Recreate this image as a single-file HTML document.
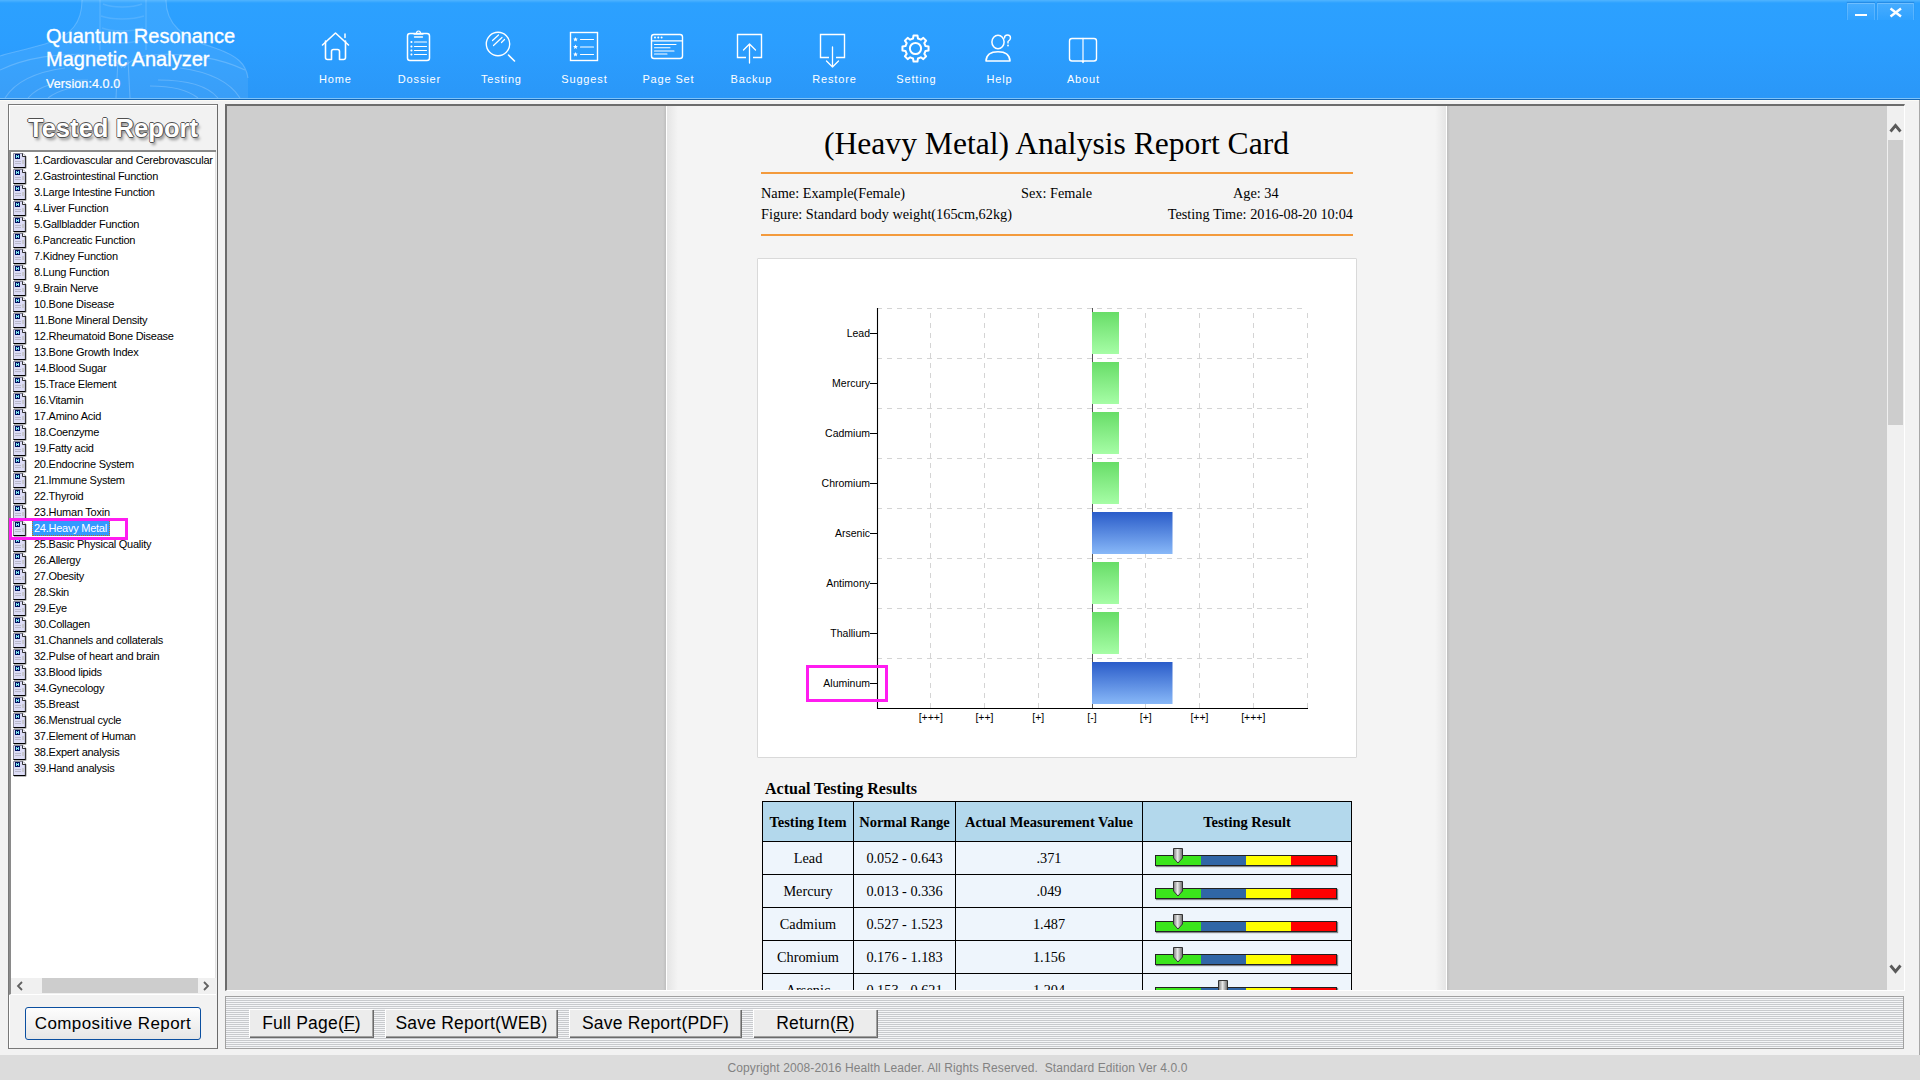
<!DOCTYPE html>
<html><head><meta charset="utf-8">
<style>
*{margin:0;padding:0;box-sizing:border-box}
html,body{width:1920px;height:1080px;overflow:hidden;background:#f2f2f2;font-family:"Liberation Sans",sans-serif;position:relative}
.a{position:absolute}
.ttl{color:#fff;font-size:20px;line-height:23px;white-space:nowrap;-webkit-text-stroke:0.35px #fff}
.nav{color:#fff;font-size:11px;line-height:14px;letter-spacing:0.85px;padding-left:0.85px;white-space:nowrap;text-align:center;width:100px}
.li{position:absolute;left:34px;font-size:11px;line-height:16px;letter-spacing:-0.25px;white-space:nowrap;color:#000}
.ico{position:absolute;left:13px;width:14px;height:16px}
.btn{position:absolute;background:#ececec;border-top:1px solid #fff;border-left:1px solid #fff;box-shadow:1px 1px 0 #6a6a6a, inset -1px -1px 0 #a0a0a0;font-size:17.5px;line-height:26px;letter-spacing:0.2px;text-align:center;color:#000;white-space:nowrap}
.serif{font-family:"Liberation Serif",serif}
.cl{position:absolute;font-size:10.5px;line-height:12px;color:#000;white-space:nowrap}
td,th{border:1px solid #000}
</style></head><body>

<div class="a" style="left:0;top:0;width:1920px;height:98px;background:linear-gradient(#2ca1ff,#2b9eff 45%,#2a97f8)"></div>
<div class="a" style="left:0;top:0;width:1920px;height:3px;background:linear-gradient(#50b4ff,#2ca1ff)"></div>
<div class="a" style="left:0;top:98px;width:1920px;height:1px;background:#80c4fa"></div>
<div class="a" style="left:0;top:99px;width:1920px;height:1px;background:#1567b5"></div>
<div class="a" style="left:0;top:100px;width:1920px;height:1px;background:#fbfaf6"></div>
<svg class="a" style="left:0;top:0" width="300" height="98" viewBox="0 0 300 98">
<path d="M82 0 C82 22 72 36 45 44 C25 50 8 53 0 56 L0 98 L248 98 L248 78 C246 64 238 56 215 48 C182 38 166 24 166 0 Z" fill="#ffffff" fill-opacity="0.07"/>
<g fill="none" stroke="#ffffff" stroke-opacity="0.2" stroke-width="1.1">
<path d="M82 0 C82 22 72 36 45 44 C25 50 8 53 0 56"/>
<path d="M166 0 C166 24 182 38 215 48 C238 56 246 64 248 78"/>
<path d="M0 70 C25 58 60 52 95 55 C110 57 118 62 122 68"/>
<path d="M245 70 C220 58 185 52 150 55 C136 57 128 62 124 68"/>
<path d="M5 98 C15 82 35 72 65 68"/><path d="M240 98 C230 82 210 72 180 68"/>
<path d="M28 98 C38 86 58 80 88 80"/><path d="M218 98 C208 86 188 80 158 80"/>
<path d="M48 98 C58 90 75 86 95 86"/><path d="M198 98 C188 90 170 86 150 86"/>
<path d="M118 60 L116 98 M128 60 L130 98"/>
</g>
<g fill="none" stroke="#ffffff" stroke-opacity="0.12" stroke-width="1.5">
<path d="M103 4 C112 8 132 8 142 4 M101 16 C112 20 132 20 144 16 M102 28 C112 32 132 32 143 28 M104 40 C114 44 130 44 140 40"/>
<path d="M100 0 V50 M146 0 V50"/>
</g>
</svg>
<div class="a ttl" style="left:46px;top:25px">Quantum Resonance</div>
<div class="a ttl" style="left:46px;top:48px">Magnetic Analyzer</div>
<div class="a ttl" style="left:46px;top:77px;font-size:12.5px;line-height:15px;letter-spacing:0.1px;-webkit-text-stroke:0.2px #fff">Version:4.0.0</div>
<div class="a nav" style="left:285px;top:72.4px">Home</div>
<div class="a nav" style="left:369px;top:72.4px">Dossier</div>
<div class="a nav" style="left:451px;top:72.4px">Testing</div>
<div class="a nav" style="left:534px;top:72.4px">Suggest</div>
<div class="a nav" style="left:618px;top:72.4px">Page Set</div>
<div class="a nav" style="left:701px;top:72.4px">Backup</div>
<div class="a nav" style="left:784px;top:72.4px">Restore</div>
<div class="a nav" style="left:866px;top:72.4px">Setting</div>
<div class="a nav" style="left:949px;top:72.4px">Help</div>
<div class="a nav" style="left:1033px;top:72.4px">About</div>
<svg class="a" style="left:0;top:0" width="1200" height="98" viewBox="0 0 1200 98">
<g stroke="#fff" fill="none" stroke-width="2" stroke-linejoin="round" stroke-linecap="round">
<!-- home -->
<path d="M322.5 45 L335.5 33 L348.5 45" stroke-width="1.6"/>
<path d="M325.5 41 V57.5 Q325.5 59.5 327.5 59.5 H331.5 V51.5 Q331.5 49.5 333.5 49.5 H337.5 Q339.5 49.5 339.5 51.5 V59.5 H343.5 Q345.5 59.5 345.5 57.5 V41" stroke-width="1.6"/>
<path d="M345 34 V37.5" stroke-width="1.5"/>
<!-- dossier -->
<rect x="407.5" y="33.5" width="22" height="27" rx="2.5" stroke-width="1.5"/>
<path d="M414 34 H423 M414.5 37 H422.5" stroke-width="1.3"/>
<path d="M416.5 33.5 Q416.5 31 418.5 31 Q420.5 31 420.5 33.5" stroke-width="1.2"/>
<path d="M414.5 42 H426.5 M414.5 46.5 H426.5 M414.5 50.5 H426.5 M414.5 54.5 H426.5" stroke-width="1.2"/>
<path d="M411.3 42 h0.3 M411.3 46.5 h0.3 M411.3 50.5 h0.3 M411.3 54.5 h0.3" stroke-width="1.8"/>
<!-- testing -->
<circle cx="498" cy="44" r="11.7" stroke-width="1.4"/>
<path d="M508.5 55 L514.5 61" stroke-width="1.6"/>
<path d="M492.5 40.5 L498.5 35 M493.5 45.5 L502 37.5 M501.5 42.5 L504.5 39.5" stroke-width="1.2"/>
<!-- suggest -->
<rect x="570.5" y="32.5" width="27" height="28" stroke-width="1.4" stroke-linejoin="miter"/>
<path d="M580.5 39.5 H593.5 M580.5 47 H593.5 M580.5 54.5 H593.5" stroke-width="1.2"/>
<!-- page set -->
<rect x="651.5" y="34.5" width="31" height="24" rx="2.5" stroke-width="1.4"/>
<path d="M652 40.8 H682" stroke-width="1.3"/>
<path d="M654.5 44.5 H676 M654.5 47.8 H670 M654.5 51 H674 M654.5 54 H667" stroke-width="1.1"/>
<!-- backup -->
<path d="M746 57.5 H737.5 V34.5 H761.5 V57.5 H753" stroke-width="1.4" stroke-linejoin="miter" stroke-linecap="butt"/>
<path d="M749.5 44 V63 M743.5 50 L749.5 44 L755.5 50" stroke-width="1.3"/>
<!-- restore -->
<path d="M829 57.5 H820.5 V34.5 H844.5 V57.5 H836" stroke-width="1.4" stroke-linejoin="miter" stroke-linecap="butt"/>
<path d="M832.5 47 V67 M826.5 61 L832.5 67 L838.5 61" stroke-width="1.3"/>
<!-- about -->
<rect x="1069.5" y="38.5" width="27" height="22.5" rx="2.5" stroke-width="1.4"/>
<path d="M1083 38.5 V62" stroke-width="1.6" stroke-opacity="0.75"/>
<!-- help -->
<ellipse cx="998" cy="42" rx="6.1" ry="6.8" stroke-width="1.5"/>
<path d="M986 61 Q986.5 51.8 998 51.8 Q1009.5 51.8 1010 61 Z" stroke-width="1.6"/>
<path d="M1004.5 38 Q1004.5 35 1007.5 35 Q1010.5 35 1010.5 38 Q1010.5 40 1008 41.5 V43" stroke-width="1.4"/>
</g>
<circle cx="1008" cy="45.5" r="0.9" fill="#fff"/>
<g fill="#fff">
<path d="M575.5 37 l0.7 1.6 1.7 0.1 -1.3 1.1 0.4 1.7 -1.5 -0.9 -1.5 0.9 0.4 -1.7 -1.3 -1.1 1.7 -0.1z"/>
<path d="M575.5 44.5 l0.7 1.6 1.7 0.1 -1.3 1.1 0.4 1.7 -1.5 -0.9 -1.5 0.9 0.4 -1.7 -1.3 -1.1 1.7 -0.1z"/>
<path d="M575.5 52 l0.7 1.6 1.7 0.1 -1.3 1.1 0.4 1.7 -1.5 -0.9 -1.5 0.9 0.4 -1.7 -1.3 -1.1 1.7 -0.1z"/>
<circle cx="655" cy="37.6" r="1"/><circle cx="658.3" cy="37.6" r="1"/><circle cx="661.6" cy="37.6" r="1"/>
<path d="M1081.5 61 L1083 63.5 L1084.5 61z"/>
</g>

<path d="M925.50 46.05 L928.55 46.53 L928.55 50.47 L925.50 50.95 L924.31 53.84 L926.12 56.33 L923.33 59.12 L920.84 57.31 L917.95 58.50 L917.47 61.55 L913.53 61.55 L913.05 58.50 L910.16 57.31 L907.67 59.12 L904.88 56.33 L906.69 53.84 L905.50 50.95 L902.45 50.47 L902.45 46.53 L905.50 46.05 L906.69 43.16 L904.88 40.67 L907.67 37.88 L910.16 39.69 L913.05 38.50 L913.53 35.45 L917.47 35.45 L917.95 38.50 L920.84 39.69 L923.33 37.88 L926.12 40.67 L924.31 43.16Z" stroke="#fff" fill="none" stroke-width="2" stroke-width="1.3" stroke-linejoin="round"/><circle cx="915.5" cy="48.5" r="5.6" stroke="#fff" fill="none" stroke-width="2" stroke-width="1.3"/>
</svg>
<div class="a" style="left:1847px;top:3px;width:28px;height:17px;border:1px solid rgba(255,255,255,0.16);border-top-color:rgba(255,255,255,0.3);border-bottom:none;background:linear-gradient(rgba(255,255,255,0.12),rgba(255,255,255,0.02));box-shadow:0 -1px 1px rgba(0,70,160,0.25)"></div>
<div class="a" style="left:1877px;top:3px;width:37px;height:17px;border:1px solid rgba(255,255,255,0.16);border-top-color:rgba(255,255,255,0.3);border-bottom:none;background:linear-gradient(rgba(255,255,255,0.12),rgba(255,255,255,0.02));box-shadow:0 -1px 1px rgba(0,70,160,0.25)"></div>
<div class="a" style="left:1855px;top:13.5px;width:11.5px;height:2.5px;background:#fff"></div>
<svg class="a" style="left:1880px;top:0" width="30" height="24"><path d="M10.5 8.5 L21 16.5 M21 8.5 L10.5 16.5" stroke="#fff" stroke-width="2.4"/></svg>
<div class="a" style="left:1919px;top:100px;width:1px;height:980px;background:#a8a8a8"></div>
<div class="a" style="left:8px;top:104px;width:210px;height:945px;border:1px solid #787878;border-right-color:#6a6a6a;box-shadow:inset 1px 1px 0 #fff"></div>
<div class="a" style="left:8px;top:111px;width:210px;text-align:center;font-weight:bold;font-size:25.6px;line-height:34px;color:#fff;letter-spacing:0px;text-shadow:-0.9px 0 0 #505050,0.9px 0 0 #505050,0 -0.9px 0 #505050,0 0.9px 0 #505050,2px 3px 3px rgba(0,0,0,0.4)">Tested Report</div>
<div class="a" style="left:9px;top:150px;width:207px;height:845px;border-top:2px solid #8a8a8a;border-left:2px solid #8a8a8a;border-bottom:1px solid #fff;background:#fff"></div>
<div class="a" style="left:215px;top:152px;width:1px;height:842px;background:#e3e3e3"></div>
<div class="li" style="top:152px">1.Cardiovascular and Cerebrovascular</div>
<div class="li" style="top:168px">2.Gastrointestinal Function</div>
<div class="li" style="top:184px">3.Large Intestine Function</div>
<div class="li" style="top:200px">4.Liver Function</div>
<div class="li" style="top:216px">5.Gallbladder Function</div>
<div class="li" style="top:232px">6.Pancreatic Function</div>
<div class="li" style="top:248px">7.Kidney Function</div>
<div class="li" style="top:264px">8.Lung Function</div>
<div class="li" style="top:280px">9.Brain Nerve</div>
<div class="li" style="top:296px">10.Bone Disease</div>
<div class="li" style="top:312px">11.Bone Mineral Density</div>
<div class="li" style="top:328px">12.Rheumatoid Bone Disease</div>
<div class="li" style="top:344px">13.Bone Growth Index</div>
<div class="li" style="top:360px">14.Blood Sugar</div>
<div class="li" style="top:376px">15.Trace Element</div>
<div class="li" style="top:392px">16.Vitamin</div>
<div class="li" style="top:408px">17.Amino Acid</div>
<div class="li" style="top:424px">18.Coenzyme</div>
<div class="li" style="top:440px">19.Fatty acid</div>
<div class="li" style="top:456px">20.Endocrine System</div>
<div class="li" style="top:472px">21.Immune System</div>
<div class="li" style="top:488px">22.Thyroid</div>
<div class="li" style="top:504px">23.Human Toxin</div>
<div class="li" style="top:520px">24.Heavy Metal</div>
<div class="li" style="top:536px">25.Basic Physical Quality</div>
<div class="li" style="top:552px">26.Allergy</div>
<div class="li" style="top:568px">27.Obesity</div>
<div class="li" style="top:584px">28.Skin</div>
<div class="li" style="top:600px">29.Eye</div>
<div class="li" style="top:616px">30.Collagen</div>
<div class="li" style="top:632px">31.Channels and collaterals</div>
<div class="li" style="top:648px">32.Pulse of heart and brain</div>
<div class="li" style="top:664px">33.Blood lipids</div>
<div class="li" style="top:680px">34.Gynecology</div>
<div class="li" style="top:696px">35.Breast</div>
<div class="li" style="top:712px">36.Menstrual cycle</div>
<div class="li" style="top:728px">37.Element of Human</div>
<div class="li" style="top:744px">38.Expert analysis</div>
<div class="li" style="top:760px">39.Hand analysis</div>
<svg class="ico" style="top:153px" width="14" height="16" viewBox="0 0 14 16"><path d="M0.5 0.5 H10 L12.5 3 V14.5 H0.5 Z" fill="#dcdcf6" stroke="#8a8a9a"/><path d="M12.5 3 V14.5 H0.5" fill="none" stroke="#000" stroke-width="1.2"/><path d="M9.5 0.5 V3.5 H12.5" fill="#fff" stroke="#000" stroke-width="0.8"/><rect x="2" y="1" width="5" height="5" fill="#001060"/><rect x="3" y="2" width="1" height="3" fill="#7ee8f0"/><rect x="5" y="2" width="1" height="3" fill="#7ee8f0"/><rect x="3" y="3" width="3" height="1" fill="#7ee8f0"/><path d="M2 8.5 H8 M2 10.5 H8" stroke="#b0b0c0" stroke-width="0.8"/><rect x="9" y="7" width="2" height="4" fill="#c8c8d0"/><path d="M13 3.5 V15.5 H1" fill="none" stroke="#999" stroke-width="0.7"/></svg>
<svg class="ico" style="top:169px" width="14" height="16" viewBox="0 0 14 16"><path d="M0.5 0.5 H10 L12.5 3 V14.5 H0.5 Z" fill="#dcdcf6" stroke="#8a8a9a"/><path d="M12.5 3 V14.5 H0.5" fill="none" stroke="#000" stroke-width="1.2"/><path d="M9.5 0.5 V3.5 H12.5" fill="#fff" stroke="#000" stroke-width="0.8"/><rect x="2" y="1" width="5" height="5" fill="#001060"/><rect x="3" y="2" width="1" height="3" fill="#7ee8f0"/><rect x="5" y="2" width="1" height="3" fill="#7ee8f0"/><rect x="3" y="3" width="3" height="1" fill="#7ee8f0"/><path d="M2 8.5 H8 M2 10.5 H8" stroke="#b0b0c0" stroke-width="0.8"/><rect x="9" y="7" width="2" height="4" fill="#c8c8d0"/><path d="M13 3.5 V15.5 H1" fill="none" stroke="#999" stroke-width="0.7"/></svg>
<svg class="ico" style="top:185px" width="14" height="16" viewBox="0 0 14 16"><path d="M0.5 0.5 H10 L12.5 3 V14.5 H0.5 Z" fill="#dcdcf6" stroke="#8a8a9a"/><path d="M12.5 3 V14.5 H0.5" fill="none" stroke="#000" stroke-width="1.2"/><path d="M9.5 0.5 V3.5 H12.5" fill="#fff" stroke="#000" stroke-width="0.8"/><rect x="2" y="1" width="5" height="5" fill="#001060"/><rect x="3" y="2" width="1" height="3" fill="#7ee8f0"/><rect x="5" y="2" width="1" height="3" fill="#7ee8f0"/><rect x="3" y="3" width="3" height="1" fill="#7ee8f0"/><path d="M2 8.5 H8 M2 10.5 H8" stroke="#b0b0c0" stroke-width="0.8"/><rect x="9" y="7" width="2" height="4" fill="#c8c8d0"/><path d="M13 3.5 V15.5 H1" fill="none" stroke="#999" stroke-width="0.7"/></svg>
<svg class="ico" style="top:201px" width="14" height="16" viewBox="0 0 14 16"><path d="M0.5 0.5 H10 L12.5 3 V14.5 H0.5 Z" fill="#dcdcf6" stroke="#8a8a9a"/><path d="M12.5 3 V14.5 H0.5" fill="none" stroke="#000" stroke-width="1.2"/><path d="M9.5 0.5 V3.5 H12.5" fill="#fff" stroke="#000" stroke-width="0.8"/><rect x="2" y="1" width="5" height="5" fill="#001060"/><rect x="3" y="2" width="1" height="3" fill="#7ee8f0"/><rect x="5" y="2" width="1" height="3" fill="#7ee8f0"/><rect x="3" y="3" width="3" height="1" fill="#7ee8f0"/><path d="M2 8.5 H8 M2 10.5 H8" stroke="#b0b0c0" stroke-width="0.8"/><rect x="9" y="7" width="2" height="4" fill="#c8c8d0"/><path d="M13 3.5 V15.5 H1" fill="none" stroke="#999" stroke-width="0.7"/></svg>
<svg class="ico" style="top:217px" width="14" height="16" viewBox="0 0 14 16"><path d="M0.5 0.5 H10 L12.5 3 V14.5 H0.5 Z" fill="#dcdcf6" stroke="#8a8a9a"/><path d="M12.5 3 V14.5 H0.5" fill="none" stroke="#000" stroke-width="1.2"/><path d="M9.5 0.5 V3.5 H12.5" fill="#fff" stroke="#000" stroke-width="0.8"/><rect x="2" y="1" width="5" height="5" fill="#001060"/><rect x="3" y="2" width="1" height="3" fill="#7ee8f0"/><rect x="5" y="2" width="1" height="3" fill="#7ee8f0"/><rect x="3" y="3" width="3" height="1" fill="#7ee8f0"/><path d="M2 8.5 H8 M2 10.5 H8" stroke="#b0b0c0" stroke-width="0.8"/><rect x="9" y="7" width="2" height="4" fill="#c8c8d0"/><path d="M13 3.5 V15.5 H1" fill="none" stroke="#999" stroke-width="0.7"/></svg>
<svg class="ico" style="top:233px" width="14" height="16" viewBox="0 0 14 16"><path d="M0.5 0.5 H10 L12.5 3 V14.5 H0.5 Z" fill="#dcdcf6" stroke="#8a8a9a"/><path d="M12.5 3 V14.5 H0.5" fill="none" stroke="#000" stroke-width="1.2"/><path d="M9.5 0.5 V3.5 H12.5" fill="#fff" stroke="#000" stroke-width="0.8"/><rect x="2" y="1" width="5" height="5" fill="#001060"/><rect x="3" y="2" width="1" height="3" fill="#7ee8f0"/><rect x="5" y="2" width="1" height="3" fill="#7ee8f0"/><rect x="3" y="3" width="3" height="1" fill="#7ee8f0"/><path d="M2 8.5 H8 M2 10.5 H8" stroke="#b0b0c0" stroke-width="0.8"/><rect x="9" y="7" width="2" height="4" fill="#c8c8d0"/><path d="M13 3.5 V15.5 H1" fill="none" stroke="#999" stroke-width="0.7"/></svg>
<svg class="ico" style="top:249px" width="14" height="16" viewBox="0 0 14 16"><path d="M0.5 0.5 H10 L12.5 3 V14.5 H0.5 Z" fill="#dcdcf6" stroke="#8a8a9a"/><path d="M12.5 3 V14.5 H0.5" fill="none" stroke="#000" stroke-width="1.2"/><path d="M9.5 0.5 V3.5 H12.5" fill="#fff" stroke="#000" stroke-width="0.8"/><rect x="2" y="1" width="5" height="5" fill="#001060"/><rect x="3" y="2" width="1" height="3" fill="#7ee8f0"/><rect x="5" y="2" width="1" height="3" fill="#7ee8f0"/><rect x="3" y="3" width="3" height="1" fill="#7ee8f0"/><path d="M2 8.5 H8 M2 10.5 H8" stroke="#b0b0c0" stroke-width="0.8"/><rect x="9" y="7" width="2" height="4" fill="#c8c8d0"/><path d="M13 3.5 V15.5 H1" fill="none" stroke="#999" stroke-width="0.7"/></svg>
<svg class="ico" style="top:265px" width="14" height="16" viewBox="0 0 14 16"><path d="M0.5 0.5 H10 L12.5 3 V14.5 H0.5 Z" fill="#dcdcf6" stroke="#8a8a9a"/><path d="M12.5 3 V14.5 H0.5" fill="none" stroke="#000" stroke-width="1.2"/><path d="M9.5 0.5 V3.5 H12.5" fill="#fff" stroke="#000" stroke-width="0.8"/><rect x="2" y="1" width="5" height="5" fill="#001060"/><rect x="3" y="2" width="1" height="3" fill="#7ee8f0"/><rect x="5" y="2" width="1" height="3" fill="#7ee8f0"/><rect x="3" y="3" width="3" height="1" fill="#7ee8f0"/><path d="M2 8.5 H8 M2 10.5 H8" stroke="#b0b0c0" stroke-width="0.8"/><rect x="9" y="7" width="2" height="4" fill="#c8c8d0"/><path d="M13 3.5 V15.5 H1" fill="none" stroke="#999" stroke-width="0.7"/></svg>
<svg class="ico" style="top:281px" width="14" height="16" viewBox="0 0 14 16"><path d="M0.5 0.5 H10 L12.5 3 V14.5 H0.5 Z" fill="#dcdcf6" stroke="#8a8a9a"/><path d="M12.5 3 V14.5 H0.5" fill="none" stroke="#000" stroke-width="1.2"/><path d="M9.5 0.5 V3.5 H12.5" fill="#fff" stroke="#000" stroke-width="0.8"/><rect x="2" y="1" width="5" height="5" fill="#001060"/><rect x="3" y="2" width="1" height="3" fill="#7ee8f0"/><rect x="5" y="2" width="1" height="3" fill="#7ee8f0"/><rect x="3" y="3" width="3" height="1" fill="#7ee8f0"/><path d="M2 8.5 H8 M2 10.5 H8" stroke="#b0b0c0" stroke-width="0.8"/><rect x="9" y="7" width="2" height="4" fill="#c8c8d0"/><path d="M13 3.5 V15.5 H1" fill="none" stroke="#999" stroke-width="0.7"/></svg>
<svg class="ico" style="top:297px" width="14" height="16" viewBox="0 0 14 16"><path d="M0.5 0.5 H10 L12.5 3 V14.5 H0.5 Z" fill="#dcdcf6" stroke="#8a8a9a"/><path d="M12.5 3 V14.5 H0.5" fill="none" stroke="#000" stroke-width="1.2"/><path d="M9.5 0.5 V3.5 H12.5" fill="#fff" stroke="#000" stroke-width="0.8"/><rect x="2" y="1" width="5" height="5" fill="#001060"/><rect x="3" y="2" width="1" height="3" fill="#7ee8f0"/><rect x="5" y="2" width="1" height="3" fill="#7ee8f0"/><rect x="3" y="3" width="3" height="1" fill="#7ee8f0"/><path d="M2 8.5 H8 M2 10.5 H8" stroke="#b0b0c0" stroke-width="0.8"/><rect x="9" y="7" width="2" height="4" fill="#c8c8d0"/><path d="M13 3.5 V15.5 H1" fill="none" stroke="#999" stroke-width="0.7"/></svg>
<svg class="ico" style="top:313px" width="14" height="16" viewBox="0 0 14 16"><path d="M0.5 0.5 H10 L12.5 3 V14.5 H0.5 Z" fill="#dcdcf6" stroke="#8a8a9a"/><path d="M12.5 3 V14.5 H0.5" fill="none" stroke="#000" stroke-width="1.2"/><path d="M9.5 0.5 V3.5 H12.5" fill="#fff" stroke="#000" stroke-width="0.8"/><rect x="2" y="1" width="5" height="5" fill="#001060"/><rect x="3" y="2" width="1" height="3" fill="#7ee8f0"/><rect x="5" y="2" width="1" height="3" fill="#7ee8f0"/><rect x="3" y="3" width="3" height="1" fill="#7ee8f0"/><path d="M2 8.5 H8 M2 10.5 H8" stroke="#b0b0c0" stroke-width="0.8"/><rect x="9" y="7" width="2" height="4" fill="#c8c8d0"/><path d="M13 3.5 V15.5 H1" fill="none" stroke="#999" stroke-width="0.7"/></svg>
<svg class="ico" style="top:329px" width="14" height="16" viewBox="0 0 14 16"><path d="M0.5 0.5 H10 L12.5 3 V14.5 H0.5 Z" fill="#dcdcf6" stroke="#8a8a9a"/><path d="M12.5 3 V14.5 H0.5" fill="none" stroke="#000" stroke-width="1.2"/><path d="M9.5 0.5 V3.5 H12.5" fill="#fff" stroke="#000" stroke-width="0.8"/><rect x="2" y="1" width="5" height="5" fill="#001060"/><rect x="3" y="2" width="1" height="3" fill="#7ee8f0"/><rect x="5" y="2" width="1" height="3" fill="#7ee8f0"/><rect x="3" y="3" width="3" height="1" fill="#7ee8f0"/><path d="M2 8.5 H8 M2 10.5 H8" stroke="#b0b0c0" stroke-width="0.8"/><rect x="9" y="7" width="2" height="4" fill="#c8c8d0"/><path d="M13 3.5 V15.5 H1" fill="none" stroke="#999" stroke-width="0.7"/></svg>
<svg class="ico" style="top:345px" width="14" height="16" viewBox="0 0 14 16"><path d="M0.5 0.5 H10 L12.5 3 V14.5 H0.5 Z" fill="#dcdcf6" stroke="#8a8a9a"/><path d="M12.5 3 V14.5 H0.5" fill="none" stroke="#000" stroke-width="1.2"/><path d="M9.5 0.5 V3.5 H12.5" fill="#fff" stroke="#000" stroke-width="0.8"/><rect x="2" y="1" width="5" height="5" fill="#001060"/><rect x="3" y="2" width="1" height="3" fill="#7ee8f0"/><rect x="5" y="2" width="1" height="3" fill="#7ee8f0"/><rect x="3" y="3" width="3" height="1" fill="#7ee8f0"/><path d="M2 8.5 H8 M2 10.5 H8" stroke="#b0b0c0" stroke-width="0.8"/><rect x="9" y="7" width="2" height="4" fill="#c8c8d0"/><path d="M13 3.5 V15.5 H1" fill="none" stroke="#999" stroke-width="0.7"/></svg>
<svg class="ico" style="top:361px" width="14" height="16" viewBox="0 0 14 16"><path d="M0.5 0.5 H10 L12.5 3 V14.5 H0.5 Z" fill="#dcdcf6" stroke="#8a8a9a"/><path d="M12.5 3 V14.5 H0.5" fill="none" stroke="#000" stroke-width="1.2"/><path d="M9.5 0.5 V3.5 H12.5" fill="#fff" stroke="#000" stroke-width="0.8"/><rect x="2" y="1" width="5" height="5" fill="#001060"/><rect x="3" y="2" width="1" height="3" fill="#7ee8f0"/><rect x="5" y="2" width="1" height="3" fill="#7ee8f0"/><rect x="3" y="3" width="3" height="1" fill="#7ee8f0"/><path d="M2 8.5 H8 M2 10.5 H8" stroke="#b0b0c0" stroke-width="0.8"/><rect x="9" y="7" width="2" height="4" fill="#c8c8d0"/><path d="M13 3.5 V15.5 H1" fill="none" stroke="#999" stroke-width="0.7"/></svg>
<svg class="ico" style="top:377px" width="14" height="16" viewBox="0 0 14 16"><path d="M0.5 0.5 H10 L12.5 3 V14.5 H0.5 Z" fill="#dcdcf6" stroke="#8a8a9a"/><path d="M12.5 3 V14.5 H0.5" fill="none" stroke="#000" stroke-width="1.2"/><path d="M9.5 0.5 V3.5 H12.5" fill="#fff" stroke="#000" stroke-width="0.8"/><rect x="2" y="1" width="5" height="5" fill="#001060"/><rect x="3" y="2" width="1" height="3" fill="#7ee8f0"/><rect x="5" y="2" width="1" height="3" fill="#7ee8f0"/><rect x="3" y="3" width="3" height="1" fill="#7ee8f0"/><path d="M2 8.5 H8 M2 10.5 H8" stroke="#b0b0c0" stroke-width="0.8"/><rect x="9" y="7" width="2" height="4" fill="#c8c8d0"/><path d="M13 3.5 V15.5 H1" fill="none" stroke="#999" stroke-width="0.7"/></svg>
<svg class="ico" style="top:393px" width="14" height="16" viewBox="0 0 14 16"><path d="M0.5 0.5 H10 L12.5 3 V14.5 H0.5 Z" fill="#dcdcf6" stroke="#8a8a9a"/><path d="M12.5 3 V14.5 H0.5" fill="none" stroke="#000" stroke-width="1.2"/><path d="M9.5 0.5 V3.5 H12.5" fill="#fff" stroke="#000" stroke-width="0.8"/><rect x="2" y="1" width="5" height="5" fill="#001060"/><rect x="3" y="2" width="1" height="3" fill="#7ee8f0"/><rect x="5" y="2" width="1" height="3" fill="#7ee8f0"/><rect x="3" y="3" width="3" height="1" fill="#7ee8f0"/><path d="M2 8.5 H8 M2 10.5 H8" stroke="#b0b0c0" stroke-width="0.8"/><rect x="9" y="7" width="2" height="4" fill="#c8c8d0"/><path d="M13 3.5 V15.5 H1" fill="none" stroke="#999" stroke-width="0.7"/></svg>
<svg class="ico" style="top:409px" width="14" height="16" viewBox="0 0 14 16"><path d="M0.5 0.5 H10 L12.5 3 V14.5 H0.5 Z" fill="#dcdcf6" stroke="#8a8a9a"/><path d="M12.5 3 V14.5 H0.5" fill="none" stroke="#000" stroke-width="1.2"/><path d="M9.5 0.5 V3.5 H12.5" fill="#fff" stroke="#000" stroke-width="0.8"/><rect x="2" y="1" width="5" height="5" fill="#001060"/><rect x="3" y="2" width="1" height="3" fill="#7ee8f0"/><rect x="5" y="2" width="1" height="3" fill="#7ee8f0"/><rect x="3" y="3" width="3" height="1" fill="#7ee8f0"/><path d="M2 8.5 H8 M2 10.5 H8" stroke="#b0b0c0" stroke-width="0.8"/><rect x="9" y="7" width="2" height="4" fill="#c8c8d0"/><path d="M13 3.5 V15.5 H1" fill="none" stroke="#999" stroke-width="0.7"/></svg>
<svg class="ico" style="top:425px" width="14" height="16" viewBox="0 0 14 16"><path d="M0.5 0.5 H10 L12.5 3 V14.5 H0.5 Z" fill="#dcdcf6" stroke="#8a8a9a"/><path d="M12.5 3 V14.5 H0.5" fill="none" stroke="#000" stroke-width="1.2"/><path d="M9.5 0.5 V3.5 H12.5" fill="#fff" stroke="#000" stroke-width="0.8"/><rect x="2" y="1" width="5" height="5" fill="#001060"/><rect x="3" y="2" width="1" height="3" fill="#7ee8f0"/><rect x="5" y="2" width="1" height="3" fill="#7ee8f0"/><rect x="3" y="3" width="3" height="1" fill="#7ee8f0"/><path d="M2 8.5 H8 M2 10.5 H8" stroke="#b0b0c0" stroke-width="0.8"/><rect x="9" y="7" width="2" height="4" fill="#c8c8d0"/><path d="M13 3.5 V15.5 H1" fill="none" stroke="#999" stroke-width="0.7"/></svg>
<svg class="ico" style="top:441px" width="14" height="16" viewBox="0 0 14 16"><path d="M0.5 0.5 H10 L12.5 3 V14.5 H0.5 Z" fill="#dcdcf6" stroke="#8a8a9a"/><path d="M12.5 3 V14.5 H0.5" fill="none" stroke="#000" stroke-width="1.2"/><path d="M9.5 0.5 V3.5 H12.5" fill="#fff" stroke="#000" stroke-width="0.8"/><rect x="2" y="1" width="5" height="5" fill="#001060"/><rect x="3" y="2" width="1" height="3" fill="#7ee8f0"/><rect x="5" y="2" width="1" height="3" fill="#7ee8f0"/><rect x="3" y="3" width="3" height="1" fill="#7ee8f0"/><path d="M2 8.5 H8 M2 10.5 H8" stroke="#b0b0c0" stroke-width="0.8"/><rect x="9" y="7" width="2" height="4" fill="#c8c8d0"/><path d="M13 3.5 V15.5 H1" fill="none" stroke="#999" stroke-width="0.7"/></svg>
<svg class="ico" style="top:457px" width="14" height="16" viewBox="0 0 14 16"><path d="M0.5 0.5 H10 L12.5 3 V14.5 H0.5 Z" fill="#dcdcf6" stroke="#8a8a9a"/><path d="M12.5 3 V14.5 H0.5" fill="none" stroke="#000" stroke-width="1.2"/><path d="M9.5 0.5 V3.5 H12.5" fill="#fff" stroke="#000" stroke-width="0.8"/><rect x="2" y="1" width="5" height="5" fill="#001060"/><rect x="3" y="2" width="1" height="3" fill="#7ee8f0"/><rect x="5" y="2" width="1" height="3" fill="#7ee8f0"/><rect x="3" y="3" width="3" height="1" fill="#7ee8f0"/><path d="M2 8.5 H8 M2 10.5 H8" stroke="#b0b0c0" stroke-width="0.8"/><rect x="9" y="7" width="2" height="4" fill="#c8c8d0"/><path d="M13 3.5 V15.5 H1" fill="none" stroke="#999" stroke-width="0.7"/></svg>
<svg class="ico" style="top:473px" width="14" height="16" viewBox="0 0 14 16"><path d="M0.5 0.5 H10 L12.5 3 V14.5 H0.5 Z" fill="#dcdcf6" stroke="#8a8a9a"/><path d="M12.5 3 V14.5 H0.5" fill="none" stroke="#000" stroke-width="1.2"/><path d="M9.5 0.5 V3.5 H12.5" fill="#fff" stroke="#000" stroke-width="0.8"/><rect x="2" y="1" width="5" height="5" fill="#001060"/><rect x="3" y="2" width="1" height="3" fill="#7ee8f0"/><rect x="5" y="2" width="1" height="3" fill="#7ee8f0"/><rect x="3" y="3" width="3" height="1" fill="#7ee8f0"/><path d="M2 8.5 H8 M2 10.5 H8" stroke="#b0b0c0" stroke-width="0.8"/><rect x="9" y="7" width="2" height="4" fill="#c8c8d0"/><path d="M13 3.5 V15.5 H1" fill="none" stroke="#999" stroke-width="0.7"/></svg>
<svg class="ico" style="top:489px" width="14" height="16" viewBox="0 0 14 16"><path d="M0.5 0.5 H10 L12.5 3 V14.5 H0.5 Z" fill="#dcdcf6" stroke="#8a8a9a"/><path d="M12.5 3 V14.5 H0.5" fill="none" stroke="#000" stroke-width="1.2"/><path d="M9.5 0.5 V3.5 H12.5" fill="#fff" stroke="#000" stroke-width="0.8"/><rect x="2" y="1" width="5" height="5" fill="#001060"/><rect x="3" y="2" width="1" height="3" fill="#7ee8f0"/><rect x="5" y="2" width="1" height="3" fill="#7ee8f0"/><rect x="3" y="3" width="3" height="1" fill="#7ee8f0"/><path d="M2 8.5 H8 M2 10.5 H8" stroke="#b0b0c0" stroke-width="0.8"/><rect x="9" y="7" width="2" height="4" fill="#c8c8d0"/><path d="M13 3.5 V15.5 H1" fill="none" stroke="#999" stroke-width="0.7"/></svg>
<svg class="ico" style="top:505px" width="14" height="16" viewBox="0 0 14 16"><path d="M0.5 0.5 H10 L12.5 3 V14.5 H0.5 Z" fill="#dcdcf6" stroke="#8a8a9a"/><path d="M12.5 3 V14.5 H0.5" fill="none" stroke="#000" stroke-width="1.2"/><path d="M9.5 0.5 V3.5 H12.5" fill="#fff" stroke="#000" stroke-width="0.8"/><rect x="2" y="1" width="5" height="5" fill="#001060"/><rect x="3" y="2" width="1" height="3" fill="#7ee8f0"/><rect x="5" y="2" width="1" height="3" fill="#7ee8f0"/><rect x="3" y="3" width="3" height="1" fill="#7ee8f0"/><path d="M2 8.5 H8 M2 10.5 H8" stroke="#b0b0c0" stroke-width="0.8"/><rect x="9" y="7" width="2" height="4" fill="#c8c8d0"/><path d="M13 3.5 V15.5 H1" fill="none" stroke="#999" stroke-width="0.7"/></svg>
<svg class="ico" style="top:521px" width="14" height="16" viewBox="0 0 14 16"><path d="M0.5 0.5 H10 L12.5 3 V14.5 H0.5 Z" fill="#dcdcf6" stroke="#8a8a9a"/><path d="M12.5 3 V14.5 H0.5" fill="none" stroke="#000" stroke-width="1.2"/><path d="M9.5 0.5 V3.5 H12.5" fill="#fff" stroke="#000" stroke-width="0.8"/><rect x="2" y="1" width="5" height="5" fill="#001060"/><rect x="3" y="2" width="1" height="3" fill="#7ee8f0"/><rect x="5" y="2" width="1" height="3" fill="#7ee8f0"/><rect x="3" y="3" width="3" height="1" fill="#7ee8f0"/><path d="M2 8.5 H8 M2 10.5 H8" stroke="#b0b0c0" stroke-width="0.8"/><rect x="9" y="7" width="2" height="4" fill="#c8c8d0"/><path d="M13 3.5 V15.5 H1" fill="none" stroke="#999" stroke-width="0.7"/></svg>
<svg class="ico" style="top:537px" width="14" height="16" viewBox="0 0 14 16"><path d="M0.5 0.5 H10 L12.5 3 V14.5 H0.5 Z" fill="#dcdcf6" stroke="#8a8a9a"/><path d="M12.5 3 V14.5 H0.5" fill="none" stroke="#000" stroke-width="1.2"/><path d="M9.5 0.5 V3.5 H12.5" fill="#fff" stroke="#000" stroke-width="0.8"/><rect x="2" y="1" width="5" height="5" fill="#001060"/><rect x="3" y="2" width="1" height="3" fill="#7ee8f0"/><rect x="5" y="2" width="1" height="3" fill="#7ee8f0"/><rect x="3" y="3" width="3" height="1" fill="#7ee8f0"/><path d="M2 8.5 H8 M2 10.5 H8" stroke="#b0b0c0" stroke-width="0.8"/><rect x="9" y="7" width="2" height="4" fill="#c8c8d0"/><path d="M13 3.5 V15.5 H1" fill="none" stroke="#999" stroke-width="0.7"/></svg>
<svg class="ico" style="top:553px" width="14" height="16" viewBox="0 0 14 16"><path d="M0.5 0.5 H10 L12.5 3 V14.5 H0.5 Z" fill="#dcdcf6" stroke="#8a8a9a"/><path d="M12.5 3 V14.5 H0.5" fill="none" stroke="#000" stroke-width="1.2"/><path d="M9.5 0.5 V3.5 H12.5" fill="#fff" stroke="#000" stroke-width="0.8"/><rect x="2" y="1" width="5" height="5" fill="#001060"/><rect x="3" y="2" width="1" height="3" fill="#7ee8f0"/><rect x="5" y="2" width="1" height="3" fill="#7ee8f0"/><rect x="3" y="3" width="3" height="1" fill="#7ee8f0"/><path d="M2 8.5 H8 M2 10.5 H8" stroke="#b0b0c0" stroke-width="0.8"/><rect x="9" y="7" width="2" height="4" fill="#c8c8d0"/><path d="M13 3.5 V15.5 H1" fill="none" stroke="#999" stroke-width="0.7"/></svg>
<svg class="ico" style="top:569px" width="14" height="16" viewBox="0 0 14 16"><path d="M0.5 0.5 H10 L12.5 3 V14.5 H0.5 Z" fill="#dcdcf6" stroke="#8a8a9a"/><path d="M12.5 3 V14.5 H0.5" fill="none" stroke="#000" stroke-width="1.2"/><path d="M9.5 0.5 V3.5 H12.5" fill="#fff" stroke="#000" stroke-width="0.8"/><rect x="2" y="1" width="5" height="5" fill="#001060"/><rect x="3" y="2" width="1" height="3" fill="#7ee8f0"/><rect x="5" y="2" width="1" height="3" fill="#7ee8f0"/><rect x="3" y="3" width="3" height="1" fill="#7ee8f0"/><path d="M2 8.5 H8 M2 10.5 H8" stroke="#b0b0c0" stroke-width="0.8"/><rect x="9" y="7" width="2" height="4" fill="#c8c8d0"/><path d="M13 3.5 V15.5 H1" fill="none" stroke="#999" stroke-width="0.7"/></svg>
<svg class="ico" style="top:585px" width="14" height="16" viewBox="0 0 14 16"><path d="M0.5 0.5 H10 L12.5 3 V14.5 H0.5 Z" fill="#dcdcf6" stroke="#8a8a9a"/><path d="M12.5 3 V14.5 H0.5" fill="none" stroke="#000" stroke-width="1.2"/><path d="M9.5 0.5 V3.5 H12.5" fill="#fff" stroke="#000" stroke-width="0.8"/><rect x="2" y="1" width="5" height="5" fill="#001060"/><rect x="3" y="2" width="1" height="3" fill="#7ee8f0"/><rect x="5" y="2" width="1" height="3" fill="#7ee8f0"/><rect x="3" y="3" width="3" height="1" fill="#7ee8f0"/><path d="M2 8.5 H8 M2 10.5 H8" stroke="#b0b0c0" stroke-width="0.8"/><rect x="9" y="7" width="2" height="4" fill="#c8c8d0"/><path d="M13 3.5 V15.5 H1" fill="none" stroke="#999" stroke-width="0.7"/></svg>
<svg class="ico" style="top:601px" width="14" height="16" viewBox="0 0 14 16"><path d="M0.5 0.5 H10 L12.5 3 V14.5 H0.5 Z" fill="#dcdcf6" stroke="#8a8a9a"/><path d="M12.5 3 V14.5 H0.5" fill="none" stroke="#000" stroke-width="1.2"/><path d="M9.5 0.5 V3.5 H12.5" fill="#fff" stroke="#000" stroke-width="0.8"/><rect x="2" y="1" width="5" height="5" fill="#001060"/><rect x="3" y="2" width="1" height="3" fill="#7ee8f0"/><rect x="5" y="2" width="1" height="3" fill="#7ee8f0"/><rect x="3" y="3" width="3" height="1" fill="#7ee8f0"/><path d="M2 8.5 H8 M2 10.5 H8" stroke="#b0b0c0" stroke-width="0.8"/><rect x="9" y="7" width="2" height="4" fill="#c8c8d0"/><path d="M13 3.5 V15.5 H1" fill="none" stroke="#999" stroke-width="0.7"/></svg>
<svg class="ico" style="top:617px" width="14" height="16" viewBox="0 0 14 16"><path d="M0.5 0.5 H10 L12.5 3 V14.5 H0.5 Z" fill="#dcdcf6" stroke="#8a8a9a"/><path d="M12.5 3 V14.5 H0.5" fill="none" stroke="#000" stroke-width="1.2"/><path d="M9.5 0.5 V3.5 H12.5" fill="#fff" stroke="#000" stroke-width="0.8"/><rect x="2" y="1" width="5" height="5" fill="#001060"/><rect x="3" y="2" width="1" height="3" fill="#7ee8f0"/><rect x="5" y="2" width="1" height="3" fill="#7ee8f0"/><rect x="3" y="3" width="3" height="1" fill="#7ee8f0"/><path d="M2 8.5 H8 M2 10.5 H8" stroke="#b0b0c0" stroke-width="0.8"/><rect x="9" y="7" width="2" height="4" fill="#c8c8d0"/><path d="M13 3.5 V15.5 H1" fill="none" stroke="#999" stroke-width="0.7"/></svg>
<svg class="ico" style="top:633px" width="14" height="16" viewBox="0 0 14 16"><path d="M0.5 0.5 H10 L12.5 3 V14.5 H0.5 Z" fill="#dcdcf6" stroke="#8a8a9a"/><path d="M12.5 3 V14.5 H0.5" fill="none" stroke="#000" stroke-width="1.2"/><path d="M9.5 0.5 V3.5 H12.5" fill="#fff" stroke="#000" stroke-width="0.8"/><rect x="2" y="1" width="5" height="5" fill="#001060"/><rect x="3" y="2" width="1" height="3" fill="#7ee8f0"/><rect x="5" y="2" width="1" height="3" fill="#7ee8f0"/><rect x="3" y="3" width="3" height="1" fill="#7ee8f0"/><path d="M2 8.5 H8 M2 10.5 H8" stroke="#b0b0c0" stroke-width="0.8"/><rect x="9" y="7" width="2" height="4" fill="#c8c8d0"/><path d="M13 3.5 V15.5 H1" fill="none" stroke="#999" stroke-width="0.7"/></svg>
<svg class="ico" style="top:649px" width="14" height="16" viewBox="0 0 14 16"><path d="M0.5 0.5 H10 L12.5 3 V14.5 H0.5 Z" fill="#dcdcf6" stroke="#8a8a9a"/><path d="M12.5 3 V14.5 H0.5" fill="none" stroke="#000" stroke-width="1.2"/><path d="M9.5 0.5 V3.5 H12.5" fill="#fff" stroke="#000" stroke-width="0.8"/><rect x="2" y="1" width="5" height="5" fill="#001060"/><rect x="3" y="2" width="1" height="3" fill="#7ee8f0"/><rect x="5" y="2" width="1" height="3" fill="#7ee8f0"/><rect x="3" y="3" width="3" height="1" fill="#7ee8f0"/><path d="M2 8.5 H8 M2 10.5 H8" stroke="#b0b0c0" stroke-width="0.8"/><rect x="9" y="7" width="2" height="4" fill="#c8c8d0"/><path d="M13 3.5 V15.5 H1" fill="none" stroke="#999" stroke-width="0.7"/></svg>
<svg class="ico" style="top:665px" width="14" height="16" viewBox="0 0 14 16"><path d="M0.5 0.5 H10 L12.5 3 V14.5 H0.5 Z" fill="#dcdcf6" stroke="#8a8a9a"/><path d="M12.5 3 V14.5 H0.5" fill="none" stroke="#000" stroke-width="1.2"/><path d="M9.5 0.5 V3.5 H12.5" fill="#fff" stroke="#000" stroke-width="0.8"/><rect x="2" y="1" width="5" height="5" fill="#001060"/><rect x="3" y="2" width="1" height="3" fill="#7ee8f0"/><rect x="5" y="2" width="1" height="3" fill="#7ee8f0"/><rect x="3" y="3" width="3" height="1" fill="#7ee8f0"/><path d="M2 8.5 H8 M2 10.5 H8" stroke="#b0b0c0" stroke-width="0.8"/><rect x="9" y="7" width="2" height="4" fill="#c8c8d0"/><path d="M13 3.5 V15.5 H1" fill="none" stroke="#999" stroke-width="0.7"/></svg>
<svg class="ico" style="top:681px" width="14" height="16" viewBox="0 0 14 16"><path d="M0.5 0.5 H10 L12.5 3 V14.5 H0.5 Z" fill="#dcdcf6" stroke="#8a8a9a"/><path d="M12.5 3 V14.5 H0.5" fill="none" stroke="#000" stroke-width="1.2"/><path d="M9.5 0.5 V3.5 H12.5" fill="#fff" stroke="#000" stroke-width="0.8"/><rect x="2" y="1" width="5" height="5" fill="#001060"/><rect x="3" y="2" width="1" height="3" fill="#7ee8f0"/><rect x="5" y="2" width="1" height="3" fill="#7ee8f0"/><rect x="3" y="3" width="3" height="1" fill="#7ee8f0"/><path d="M2 8.5 H8 M2 10.5 H8" stroke="#b0b0c0" stroke-width="0.8"/><rect x="9" y="7" width="2" height="4" fill="#c8c8d0"/><path d="M13 3.5 V15.5 H1" fill="none" stroke="#999" stroke-width="0.7"/></svg>
<svg class="ico" style="top:697px" width="14" height="16" viewBox="0 0 14 16"><path d="M0.5 0.5 H10 L12.5 3 V14.5 H0.5 Z" fill="#dcdcf6" stroke="#8a8a9a"/><path d="M12.5 3 V14.5 H0.5" fill="none" stroke="#000" stroke-width="1.2"/><path d="M9.5 0.5 V3.5 H12.5" fill="#fff" stroke="#000" stroke-width="0.8"/><rect x="2" y="1" width="5" height="5" fill="#001060"/><rect x="3" y="2" width="1" height="3" fill="#7ee8f0"/><rect x="5" y="2" width="1" height="3" fill="#7ee8f0"/><rect x="3" y="3" width="3" height="1" fill="#7ee8f0"/><path d="M2 8.5 H8 M2 10.5 H8" stroke="#b0b0c0" stroke-width="0.8"/><rect x="9" y="7" width="2" height="4" fill="#c8c8d0"/><path d="M13 3.5 V15.5 H1" fill="none" stroke="#999" stroke-width="0.7"/></svg>
<svg class="ico" style="top:713px" width="14" height="16" viewBox="0 0 14 16"><path d="M0.5 0.5 H10 L12.5 3 V14.5 H0.5 Z" fill="#dcdcf6" stroke="#8a8a9a"/><path d="M12.5 3 V14.5 H0.5" fill="none" stroke="#000" stroke-width="1.2"/><path d="M9.5 0.5 V3.5 H12.5" fill="#fff" stroke="#000" stroke-width="0.8"/><rect x="2" y="1" width="5" height="5" fill="#001060"/><rect x="3" y="2" width="1" height="3" fill="#7ee8f0"/><rect x="5" y="2" width="1" height="3" fill="#7ee8f0"/><rect x="3" y="3" width="3" height="1" fill="#7ee8f0"/><path d="M2 8.5 H8 M2 10.5 H8" stroke="#b0b0c0" stroke-width="0.8"/><rect x="9" y="7" width="2" height="4" fill="#c8c8d0"/><path d="M13 3.5 V15.5 H1" fill="none" stroke="#999" stroke-width="0.7"/></svg>
<svg class="ico" style="top:729px" width="14" height="16" viewBox="0 0 14 16"><path d="M0.5 0.5 H10 L12.5 3 V14.5 H0.5 Z" fill="#dcdcf6" stroke="#8a8a9a"/><path d="M12.5 3 V14.5 H0.5" fill="none" stroke="#000" stroke-width="1.2"/><path d="M9.5 0.5 V3.5 H12.5" fill="#fff" stroke="#000" stroke-width="0.8"/><rect x="2" y="1" width="5" height="5" fill="#001060"/><rect x="3" y="2" width="1" height="3" fill="#7ee8f0"/><rect x="5" y="2" width="1" height="3" fill="#7ee8f0"/><rect x="3" y="3" width="3" height="1" fill="#7ee8f0"/><path d="M2 8.5 H8 M2 10.5 H8" stroke="#b0b0c0" stroke-width="0.8"/><rect x="9" y="7" width="2" height="4" fill="#c8c8d0"/><path d="M13 3.5 V15.5 H1" fill="none" stroke="#999" stroke-width="0.7"/></svg>
<svg class="ico" style="top:745px" width="14" height="16" viewBox="0 0 14 16"><path d="M0.5 0.5 H10 L12.5 3 V14.5 H0.5 Z" fill="#dcdcf6" stroke="#8a8a9a"/><path d="M12.5 3 V14.5 H0.5" fill="none" stroke="#000" stroke-width="1.2"/><path d="M9.5 0.5 V3.5 H12.5" fill="#fff" stroke="#000" stroke-width="0.8"/><rect x="2" y="1" width="5" height="5" fill="#001060"/><rect x="3" y="2" width="1" height="3" fill="#7ee8f0"/><rect x="5" y="2" width="1" height="3" fill="#7ee8f0"/><rect x="3" y="3" width="3" height="1" fill="#7ee8f0"/><path d="M2 8.5 H8 M2 10.5 H8" stroke="#b0b0c0" stroke-width="0.8"/><rect x="9" y="7" width="2" height="4" fill="#c8c8d0"/><path d="M13 3.5 V15.5 H1" fill="none" stroke="#999" stroke-width="0.7"/></svg>
<svg class="ico" style="top:761px" width="14" height="16" viewBox="0 0 14 16"><path d="M0.5 0.5 H10 L12.5 3 V14.5 H0.5 Z" fill="#dcdcf6" stroke="#8a8a9a"/><path d="M12.5 3 V14.5 H0.5" fill="none" stroke="#000" stroke-width="1.2"/><path d="M9.5 0.5 V3.5 H12.5" fill="#fff" stroke="#000" stroke-width="0.8"/><rect x="2" y="1" width="5" height="5" fill="#001060"/><rect x="3" y="2" width="1" height="3" fill="#7ee8f0"/><rect x="5" y="2" width="1" height="3" fill="#7ee8f0"/><rect x="3" y="3" width="3" height="1" fill="#7ee8f0"/><path d="M2 8.5 H8 M2 10.5 H8" stroke="#b0b0c0" stroke-width="0.8"/><rect x="9" y="7" width="2" height="4" fill="#c8c8d0"/><path d="M13 3.5 V15.5 H1" fill="none" stroke="#999" stroke-width="0.7"/></svg>
<div class="a" style="left:32px;top:520px;width:78px;height:16px;background:#3399ff;border:1px dotted #c07020"></div>
<div class="li" style="top:520px;color:#fff">24.Heavy Metal</div>
<div class="a" style="left:9px;top:518px;width:119px;height:22px;border:3px solid #ff1cf0"></div>
<div class="a" style="left:11px;top:978px;width:205px;height:16px;background:#f0f0f0"></div>
<div class="a" style="left:42px;top:978px;width:156px;height:15px;background:#cdcdcd"></div>
<svg class="a" style="left:11px;top:978px" width="205" height="16"><path d="M11 4 L7 8 L11 12" stroke="#606060" stroke-width="1.8" fill="none"/><path d="M193 4 L197 8 L193 12" stroke="#606060" stroke-width="1.8" fill="none"/></svg>
<div class="a" style="left:25px;top:1007px;width:176px;height:33px;border:1px solid #0b4fa0;border-radius:3px;background:linear-gradient(#fdfdfd,#f0f0f0 60%,#e6e6e6);font-size:17px;line-height:31px;text-align:center;letter-spacing:0.4px;color:#000">Compositive Report</div>
<div class="a" style="left:225px;top:104px;width:1680px;height:887px;background:#cecece;border-top:2px solid #6c6c6c;border-left:2px solid #6c6c6c;border-right:1px solid #fff;border-bottom:1px solid #fff"></div>
<div class="a" style="left:1887px;top:106px;width:17px;height:884px;background:#f0f0f0"></div>
<div class="a" style="left:1888px;top:140px;width:15px;height:285px;background:#cdcdcd"></div>
<svg class="a" style="left:1887px;top:106px" width="17" height="884"><path d="M3.5 25.5 L8.5 19.5 L13.5 25.5" stroke="#5a5a5a" stroke-width="2.8" fill="none"/><path d="M3.5 859.5 L8.5 865.5 L13.5 859.5" stroke="#5a5a5a" stroke-width="2.8" fill="none"/></svg>
<div class="a" style="left:663px;top:106px;width:3px;height:884px;background:linear-gradient(90deg,rgba(0,0,0,0),rgba(0,0,0,0.08))"></div>
<div class="a" style="left:1447px;top:106px;width:3px;height:884px;background:linear-gradient(270deg,rgba(0,0,0,0),rgba(0,0,0,0.08))"></div>
<div class="a" style="left:666px;top:106px;width:781px;height:884px;background:#f4f4f4;border-left:1px solid #fff;border-right:1px solid #fff;overflow:hidden">
<div class="a" style="left:0;top:0;width:11px;height:884px;background:linear-gradient(90deg,#e5e5e5,#f4f4f4)"></div>
<div class="a" style="right:0;top:0;width:11px;height:884px;background:linear-gradient(270deg,#e5e5e5,#f4f4f4)"></div>
<div class="a serif" style="left:0px;top:18px;width:779px;text-align:center;font-size:31.6px;line-height:40px;color:#000;white-space:nowrap">(Heavy Metal) Analysis Report Card</div>
<div class="a" style="left:94px;top:66px;width:592px;height:2px;background:#f39a3c"></div>
<div class="a" style="left:94px;top:128px;width:592px;height:2px;background:#f39a3c"></div>
<div class="a serif" style="left:94px;top:78px;font-size:14.3px;line-height:18px;color:#000;white-space:nowrap">Name: Example(Female)</div>
<div class="a serif" style="left:354px;top:78px;font-size:14.3px;line-height:18px;color:#000;white-space:nowrap">Sex: Female</div>
<div class="a serif" style="left:566px;top:78px;font-size:14.3px;line-height:18px;color:#000;white-space:nowrap">Age: 34</div>
<div class="a serif" style="left:94px;top:99px;font-size:14.3px;line-height:18px;color:#000;white-space:nowrap">Figure: Standard body weight(165cm,62kg)</div>
<div class="a serif" style="left:386px;top:99px;width:300px;text-align:right;font-size:14.3px;line-height:18px;color:#000;white-space:nowrap">Testing Time: 2016-08-20 10:04</div>
<div class="a" style="left:90px;top:152px;width:600px;height:500px;background:#fff;border:1px solid #d9d9d9;border-radius:1px"></div>
<svg class="a" style="left:90px;top:152px" width="600" height="500" viewBox="757 258 600 500"><line x1="877" y1="308.5" x2="1307" y2="308.5" stroke="#d4d4d4" stroke-width="1" stroke-dasharray="5 5"/><line x1="877" y1="358.5" x2="1307" y2="358.5" stroke="#d4d4d4" stroke-width="1" stroke-dasharray="5 5"/><line x1="877" y1="408.5" x2="1307" y2="408.5" stroke="#d4d4d4" stroke-width="1" stroke-dasharray="5 5"/><line x1="877" y1="458.5" x2="1307" y2="458.5" stroke="#d4d4d4" stroke-width="1" stroke-dasharray="5 5"/><line x1="877" y1="508.5" x2="1307" y2="508.5" stroke="#d4d4d4" stroke-width="1" stroke-dasharray="5 5"/><line x1="877" y1="558.5" x2="1307" y2="558.5" stroke="#d4d4d4" stroke-width="1" stroke-dasharray="5 5"/><line x1="877" y1="608.5" x2="1307" y2="608.5" stroke="#d4d4d4" stroke-width="1" stroke-dasharray="5 5"/><line x1="877" y1="658.5" x2="1307" y2="658.5" stroke="#d4d4d4" stroke-width="1" stroke-dasharray="5 5"/><line x1="930.5" y1="708" x2="930.5" y2="308" stroke="#d4d4d4" stroke-width="1" stroke-dasharray="5 5"/><line x1="984.5" y1="708" x2="984.5" y2="308" stroke="#d4d4d4" stroke-width="1" stroke-dasharray="5 5"/><line x1="1038.5" y1="708" x2="1038.5" y2="308" stroke="#d4d4d4" stroke-width="1" stroke-dasharray="5 5"/><line x1="1145.5" y1="708" x2="1145.5" y2="308" stroke="#d4d4d4" stroke-width="1" stroke-dasharray="5 5"/><line x1="1199.5" y1="708" x2="1199.5" y2="308" stroke="#d4d4d4" stroke-width="1" stroke-dasharray="5 5"/><line x1="1253.5" y1="708" x2="1253.5" y2="308" stroke="#d4d4d4" stroke-width="1" stroke-dasharray="5 5"/><line x1="1307.5" y1="708" x2="1307.5" y2="308" stroke="#d4d4d4" stroke-width="1" stroke-dasharray="5 5"/><line x1="1092.5" y1="308" x2="1092.5" y2="708" stroke="#555" stroke-width="1"/><defs><linearGradient id="gg" x1="0" y1="0" x2="0" y2="1"><stop offset="0" stop-color="#68dd68"/><stop offset="1" stop-color="#a6fda6"/></linearGradient><linearGradient id="bg" x1="0" y1="0" x2="0" y2="1"><stop offset="0" stop-color="#2a5cc9"/><stop offset="1" stop-color="#88b8f8"/></linearGradient></defs><rect x="1092" y="312" width="27" height="42" fill="url(#gg)"/><line x1="870" y1="333.5" x2="877" y2="333.5" stroke="#000" stroke-width="1"/><rect x="1092" y="362" width="27" height="42" fill="url(#gg)"/><line x1="870" y1="383.5" x2="877" y2="383.5" stroke="#000" stroke-width="1"/><rect x="1092" y="412" width="27" height="42" fill="url(#gg)"/><line x1="870" y1="433.5" x2="877" y2="433.5" stroke="#000" stroke-width="1"/><rect x="1092" y="462" width="27" height="42" fill="url(#gg)"/><line x1="870" y1="483.5" x2="877" y2="483.5" stroke="#000" stroke-width="1"/><rect x="1092" y="512" width="80.5" height="42" fill="url(#bg)"/><line x1="870" y1="533.5" x2="877" y2="533.5" stroke="#000" stroke-width="1"/><rect x="1092" y="562" width="27" height="42" fill="url(#gg)"/><line x1="870" y1="583.5" x2="877" y2="583.5" stroke="#000" stroke-width="1"/><rect x="1092" y="612" width="27" height="42" fill="url(#gg)"/><line x1="870" y1="633.5" x2="877" y2="633.5" stroke="#000" stroke-width="1"/><rect x="1092" y="662" width="80.5" height="42" fill="url(#bg)"/><line x1="870" y1="683.5" x2="877" y2="683.5" stroke="#000" stroke-width="1"/><line x1="877.5" y1="308" x2="877.5" y2="709" stroke="#000" stroke-width="1.1"/><line x1="877" y1="708.5" x2="1308" y2="708.5" stroke="#000" stroke-width="1"/></svg>
<div class="cl" style="left:103px;top:221px;width:100px;text-align:right">Lead</div>
<div class="cl" style="left:103px;top:271px;width:100px;text-align:right">Mercury</div>
<div class="cl" style="left:103px;top:321px;width:100px;text-align:right">Cadmium</div>
<div class="cl" style="left:103px;top:371px;width:100px;text-align:right">Chromium</div>
<div class="cl" style="left:103px;top:421px;width:100px;text-align:right">Arsenic</div>
<div class="cl" style="left:103px;top:471px;width:100px;text-align:right">Antimony</div>
<div class="cl" style="left:103px;top:521px;width:100px;text-align:right">Thallium</div>
<div class="cl" style="left:103px;top:571px;width:100px;text-align:right">Aluminum</div>
<div class="cl" style="left:233.75px;top:605px;width:60px;text-align:center">[+++]</div>
<div class="cl" style="left:287.5px;top:605px;width:60px;text-align:center">[++]</div>
<div class="cl" style="left:341.25px;top:605px;width:60px;text-align:center">[+]</div>
<div class="cl" style="left:395.0px;top:605px;width:60px;text-align:center">[-]</div>
<div class="cl" style="left:448.75px;top:605px;width:60px;text-align:center">[+]</div>
<div class="cl" style="left:502.5px;top:605px;width:60px;text-align:center">[++]</div>
<div class="cl" style="left:556.25px;top:605px;width:60px;text-align:center">[+++]</div>
<div class="a" style="left:139px;top:559px;width:82px;height:37px;border:3px solid #ff1cf0"></div>
<div class="a serif" style="left:98px;top:673px;font-size:16px;line-height:20px;font-weight:bold;white-space:nowrap">Actual Testing Results</div>
<div class="a" style="left:95px;top:695px;width:590px;height:300px;background:#eef5fc"></div>
<div class="a" style="left:95px;top:695px;width:590px;height:41px;background:#b3d8ec"></div>
<div class="a" style="left:95px;top:695px;width:590px;height:1px;background:#000"></div>
<div class="a" style="left:95px;top:735px;width:590px;height:1px;background:#000"></div>
<div class="a" style="left:95px;top:768px;width:590px;height:1px;background:#000"></div>
<div class="a" style="left:95px;top:801px;width:590px;height:1px;background:#000"></div>
<div class="a" style="left:95px;top:834px;width:590px;height:1px;background:#000"></div>
<div class="a" style="left:95px;top:867px;width:590px;height:1px;background:#000"></div>
<div class="a" style="left:95px;top:900px;width:590px;height:1px;background:#000"></div>
<div class="a" style="left:95px;top:695px;width:1px;height:300px;background:#000"></div>
<div class="a" style="left:186px;top:695px;width:1px;height:300px;background:#000"></div>
<div class="a" style="left:288px;top:695px;width:1px;height:300px;background:#000"></div>
<div class="a" style="left:475px;top:695px;width:1px;height:300px;background:#000"></div>
<div class="a" style="left:684px;top:695px;width:1px;height:300px;background:#000"></div>
<div class="a serif" style="left:95px;top:707px;width:92px;text-align:center;font-weight:bold;font-size:14.5px;line-height:18px;white-space:nowrap">Testing Item</div>
<div class="a serif" style="left:186px;top:707px;width:103px;text-align:center;font-weight:bold;font-size:14.5px;line-height:18px;white-space:nowrap">Normal Range</div>
<div class="a serif" style="left:288px;top:707px;width:188px;text-align:center;font-weight:bold;font-size:14.5px;line-height:18px;white-space:nowrap">Actual Measurement Value</div>
<div class="a serif" style="left:475px;top:707px;width:210px;text-align:center;font-weight:bold;font-size:14.5px;line-height:18px;white-space:nowrap">Testing Result</div>
<div class="a serif" style="left:95px;top:743px;width:92px;text-align:center;font-size:14.3px;line-height:18px;white-space:nowrap">Lead</div>
<div class="a serif" style="left:186px;top:743px;width:103px;text-align:center;font-size:14.3px;line-height:18px;white-space:nowrap">0.052 - 0.643</div>
<div class="a serif" style="left:288px;top:743px;width:188px;text-align:center;font-size:14.3px;line-height:18px;white-space:nowrap">.371</div>
<div class="a" style="left:488px;top:749px;width:182px;height:11px;border:1px solid #222;box-shadow:1px 1px 1px rgba(0,0,0,0.45);background:linear-gradient(90deg,#3be51c 0 25%,#3066a6 25% 50%,#ffff00 50% 75%,#ff0000 75% 100%)"></div>
<svg class="a" style="left:505px;top:741px" width="12" height="17" viewBox="0 0 12 17"><defs><linearGradient id="ig0" x1="0" x2="1"><stop offset="0" stop-color="#7a7a7a"/><stop offset="0.45" stop-color="#e8e8e8"/><stop offset="1" stop-color="#6a6a6a"/></linearGradient></defs><path d="M1.5 1.5 H10.5 V11 L6 16 L1.5 11 Z" fill="url(#ig0)" stroke="#333" stroke-width="1"/></svg>
<div class="a serif" style="left:95px;top:776px;width:92px;text-align:center;font-size:14.3px;line-height:18px;white-space:nowrap">Mercury</div>
<div class="a serif" style="left:186px;top:776px;width:103px;text-align:center;font-size:14.3px;line-height:18px;white-space:nowrap">0.013 - 0.336</div>
<div class="a serif" style="left:288px;top:776px;width:188px;text-align:center;font-size:14.3px;line-height:18px;white-space:nowrap">.049</div>
<div class="a" style="left:488px;top:782px;width:182px;height:11px;border:1px solid #222;box-shadow:1px 1px 1px rgba(0,0,0,0.45);background:linear-gradient(90deg,#3be51c 0 25%,#3066a6 25% 50%,#ffff00 50% 75%,#ff0000 75% 100%)"></div>
<svg class="a" style="left:505px;top:774px" width="12" height="17" viewBox="0 0 12 17"><defs><linearGradient id="ig1" x1="0" x2="1"><stop offset="0" stop-color="#7a7a7a"/><stop offset="0.45" stop-color="#e8e8e8"/><stop offset="1" stop-color="#6a6a6a"/></linearGradient></defs><path d="M1.5 1.5 H10.5 V11 L6 16 L1.5 11 Z" fill="url(#ig1)" stroke="#333" stroke-width="1"/></svg>
<div class="a serif" style="left:95px;top:809px;width:92px;text-align:center;font-size:14.3px;line-height:18px;white-space:nowrap">Cadmium</div>
<div class="a serif" style="left:186px;top:809px;width:103px;text-align:center;font-size:14.3px;line-height:18px;white-space:nowrap">0.527 - 1.523</div>
<div class="a serif" style="left:288px;top:809px;width:188px;text-align:center;font-size:14.3px;line-height:18px;white-space:nowrap">1.487</div>
<div class="a" style="left:488px;top:815px;width:182px;height:11px;border:1px solid #222;box-shadow:1px 1px 1px rgba(0,0,0,0.45);background:linear-gradient(90deg,#3be51c 0 25%,#3066a6 25% 50%,#ffff00 50% 75%,#ff0000 75% 100%)"></div>
<svg class="a" style="left:505px;top:807px" width="12" height="17" viewBox="0 0 12 17"><defs><linearGradient id="ig2" x1="0" x2="1"><stop offset="0" stop-color="#7a7a7a"/><stop offset="0.45" stop-color="#e8e8e8"/><stop offset="1" stop-color="#6a6a6a"/></linearGradient></defs><path d="M1.5 1.5 H10.5 V11 L6 16 L1.5 11 Z" fill="url(#ig2)" stroke="#333" stroke-width="1"/></svg>
<div class="a serif" style="left:95px;top:842px;width:92px;text-align:center;font-size:14.3px;line-height:18px;white-space:nowrap">Chromium</div>
<div class="a serif" style="left:186px;top:842px;width:103px;text-align:center;font-size:14.3px;line-height:18px;white-space:nowrap">0.176 - 1.183</div>
<div class="a serif" style="left:288px;top:842px;width:188px;text-align:center;font-size:14.3px;line-height:18px;white-space:nowrap">1.156</div>
<div class="a" style="left:488px;top:848px;width:182px;height:11px;border:1px solid #222;box-shadow:1px 1px 1px rgba(0,0,0,0.45);background:linear-gradient(90deg,#3be51c 0 25%,#3066a6 25% 50%,#ffff00 50% 75%,#ff0000 75% 100%)"></div>
<svg class="a" style="left:505px;top:840px" width="12" height="17" viewBox="0 0 12 17"><defs><linearGradient id="ig3" x1="0" x2="1"><stop offset="0" stop-color="#7a7a7a"/><stop offset="0.45" stop-color="#e8e8e8"/><stop offset="1" stop-color="#6a6a6a"/></linearGradient></defs><path d="M1.5 1.5 H10.5 V11 L6 16 L1.5 11 Z" fill="url(#ig3)" stroke="#333" stroke-width="1"/></svg>
<div class="a serif" style="left:95px;top:875px;width:92px;text-align:center;font-size:14.3px;line-height:18px;white-space:nowrap">Arsenic</div>
<div class="a serif" style="left:186px;top:875px;width:103px;text-align:center;font-size:14.3px;line-height:18px;white-space:nowrap">0.153 - 0.621</div>
<div class="a serif" style="left:288px;top:875px;width:188px;text-align:center;font-size:14.3px;line-height:18px;white-space:nowrap">1.204</div>
<div class="a" style="left:488px;top:881px;width:182px;height:11px;border:1px solid #222;box-shadow:1px 1px 1px rgba(0,0,0,0.45);background:linear-gradient(90deg,#3be51c 0 25%,#3066a6 25% 50%,#ffff00 50% 75%,#ff0000 75% 100%)"></div>
<svg class="a" style="left:550px;top:873px" width="12" height="17" viewBox="0 0 12 17"><defs><linearGradient id="ig4" x1="0" x2="1"><stop offset="0" stop-color="#7a7a7a"/><stop offset="0.45" stop-color="#e8e8e8"/><stop offset="1" stop-color="#6a6a6a"/></linearGradient></defs><path d="M1.5 1.5 H10.5 V11 L6 16 L1.5 11 Z" fill="url(#ig4)" stroke="#333" stroke-width="1"/></svg>
</div>
<div class="a" style="left:225px;top:996px;width:1679px;height:53px;border:1px solid #a0a0a0;background:repeating-linear-gradient(#f4f5f7 0 1px,#c8cacd 1px 2px)"></div>
<div class="btn" style="left:249px;top:1009px;width:124px;height:28px">Full Page(<u>F</u>)</div>
<div class="btn" style="left:385px;top:1009px;width:172px;height:28px">Save Report(WEB)</div>
<div class="btn" style="left:569px;top:1009px;width:172px;height:28px">Save Report(PDF)</div>
<div class="btn" style="left:753px;top:1009px;width:124px;height:28px">Return(<u>R</u>)</div>
<div class="a" style="left:0;top:1055px;width:1920px;height:25px;background:#dcdcdc"></div>
<div class="a" style="left:0;top:1061px;width:1915px;text-align:center;font-size:12px;line-height:15px;color:#828282;white-space:pre;letter-spacing:0.1px">Copyright 2008-2016 Health Leader. All Rights Reserved.  Standard Edition Ver 4.0.0</div>
</body></html>
